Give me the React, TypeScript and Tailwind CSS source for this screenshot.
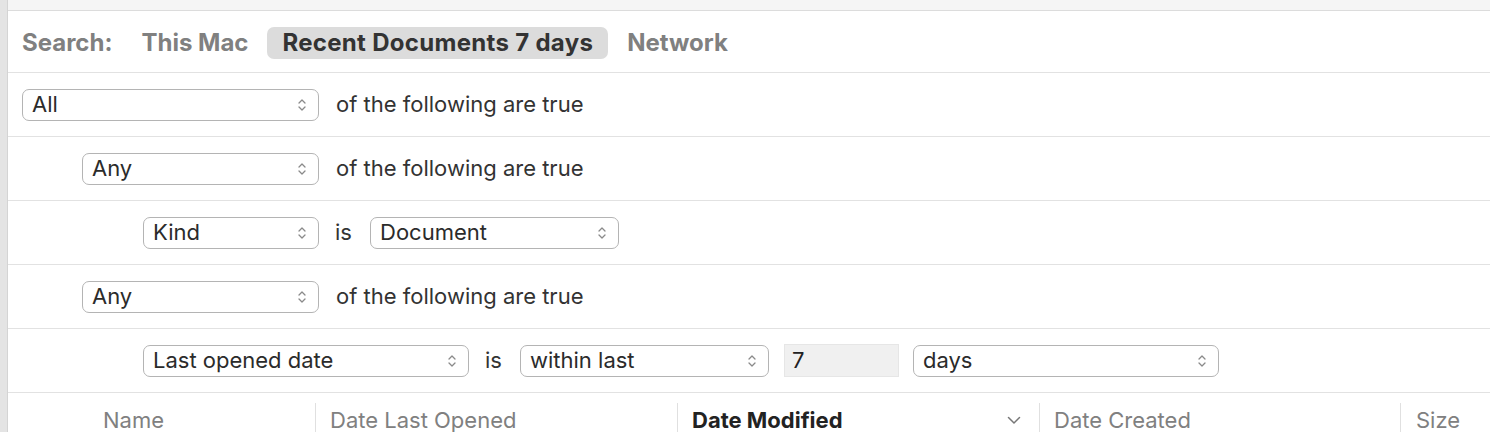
import React from "react";

const font = { fontFamily: "Inter, 'Liberation Sans', sans-serif" };

function Stepper() {
  return (
    <svg width="10" height="16" viewBox="0 0 10 16" fill="none" stroke="#8a8a8a" strokeWidth={1.3} strokeLinecap="round" strokeLinejoin="round">
      <path d="M2 6 L5 3 L8 6" />
      <path d="M2 10 L5 13 L8 10" />
    </svg>
  );
}

function Popup({ label, width }: { label: string; width: string }) {
  return (
    <div className={`${width} h-[32px] flex items-center justify-between pl-[9px] pr-[11px] rounded-[7px] border-[1.5px] border-[#b4b4b4] bg-white text-[22px] text-[#2b2b2b]`}>
      <span>{label}</span>
      <Stepper />
    </div>
  );
}

function Row({ children, indent }: { children: React.ReactNode; indent: string }) {
  return (
    <div className={`h-[64px] flex items-center border-b border-[#e2e2e2] ${indent}`}>{children}</div>
  );
}

function Text({ children, className = "" }: { children: React.ReactNode; className?: string }) {
  return <span className={`text-[22px] text-[#333333] ${className}`}>{children}</span>;
}

export default function App() {
  return (
    <div className="w-[1490px] h-[432px] flex bg-white overflow-hidden" style={font}>
      <div className="w-[8px] shrink-0 bg-[#e4e4e4] border-r border-[#d4d4d4]" />
      <div className="flex-1 flex flex-col">
        <div className="h-[11px] shrink-0 bg-[#f5f5f5] border-b border-[#dcdcdc]" />
        <div className="h-[62px] shrink-0 flex items-center pl-[14px] pt-[3px] border-b border-[#e2e2e2] text-[24px] font-bold text-[#808080]">
          <span>Search:</span>
          <span className="ml-[29px]">This Mac</span>
          <span className="ml-[19px] h-[32px] flex items-center px-[15px] rounded-[7px] bg-[#dcdcdc] text-[#333333] tracking-[0.3px]">Recent Documents 7 days</span>
          <span className="ml-[19px]">Network</span>
        </div>
        <Row indent="pl-[14px]">
          <Popup label="All" width="w-[297px]" />
          <Text className="ml-[17px]">of the following are true</Text>
        </Row>
        <Row indent="pl-[74px]">
          <Popup label="Any" width="w-[237px]" />
          <Text className="ml-[17px]">of the following are true</Text>
        </Row>
        <Row indent="pl-[135px]">
          <Popup label="Kind" width="w-[176px]" />
          <Text className="ml-[16px] w-[35px]">is</Text>
          <Popup label="Document" width="w-[249px]" />
        </Row>
        <Row indent="pl-[74px]">
          <Popup label="Any" width="w-[237px]" />
          <Text className="ml-[17px]">of the following are true</Text>
        </Row>
        <Row indent="pl-[135px]">
          <Popup label="Last opened date" width="w-[326px]" />
          <Text className="ml-[16px] w-[35px]">is</Text>
          <Popup label="within last" width="w-[249px]" />
          <div className="ml-[15px] w-[115px] h-[33px] flex items-center pl-[7px] bg-[#f0f0f0] border border-[#e6e6e6] text-[22px] text-[#222222]">7</div>
          <div className="ml-[14px]">
            <Popup label="days" width="w-[306px]" />
          </div>
        </Row>
        <div className="flex-1 flex items-end text-[22px] text-[#808080]">
          <div className="w-[307px] h-[29px] flex items-center pt-[5px] pl-[95px]">Name</div>
          <div className="w-[362px] h-[29px] flex items-center pt-[5px] pl-[14px] border-l border-[#e0e0e0]">Date Last Opened</div>
          <div className="w-[362px] h-[29px] flex items-center justify-between pt-[5px] pl-[14px] pr-[18px] border-l border-[#e0e0e0] font-bold text-[#222222]">
            <span>Date Modified</span>
            <svg width="14" height="9" viewBox="0 0 14 9" fill="none" stroke="#777777" strokeWidth={1.5} strokeLinecap="round" strokeLinejoin="round">
              <path d="M1.5 1.5 L7 7 L12.5 1.5" />
            </svg>
          </div>
          <div className="w-[361px] h-[29px] flex items-center pt-[5px] pl-[14px] border-l border-[#e0e0e0]">Date Created</div>
          <div className="flex-1 h-[29px] flex items-center pt-[5px] pl-[15px] border-l border-[#e0e0e0]">Size</div>
        </div>
      </div>
    </div>
  );
}
